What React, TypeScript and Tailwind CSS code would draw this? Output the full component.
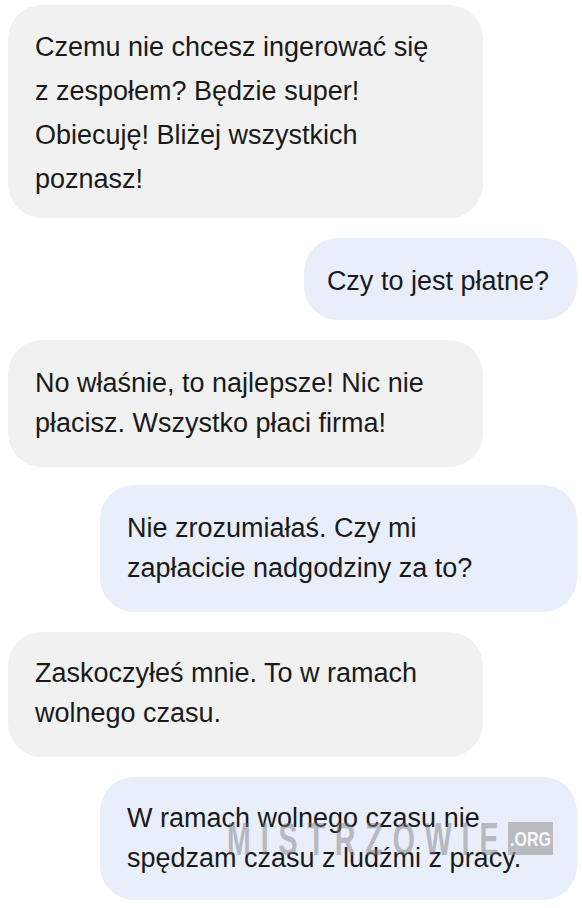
import React from "react";

const font = { fontFamily: '"Liberation Sans", Arial, sans-serif' };

function Left({ lines, cls }: { lines: string[]; cls: string }) {
  return (
    <div className={`self-start ml-[8px] w-[475px] rounded-[34px] bg-[#f1f1f1] pl-[27px] text-[27px] text-[#1a1a1a] ${cls}`}>
      {lines.map((l, i) => (
        <div key={i} className="whitespace-nowrap">{l}</div>
      ))}
    </div>
  );
}

export default function App() {
  return (
    <div className="w-[582px] h-[908px] bg-white overflow-hidden flex flex-col pt-[5px]" style={font}>
      <Left
        cls="pt-[20px] pb-[17px] leading-[44px]"
        lines={["Czemu nie chcesz ingerować się", "z zespołem? Będzie super!", "Obiecuję! Bliżej wszystkich", "poznasz!"]}
      />
      <div className="self-end mr-[5px] mt-[20px] rounded-[34px] bg-[#e8eefa] pl-[23px] pr-[28px] pt-[23px] pb-[19px] leading-[40px] text-[27px] text-[#1a1a1a] whitespace-nowrap">
        Czy to jest płatne?
      </div>
      <Left
        cls="mt-[20px] pt-[23px] pb-[24px] leading-[40px]"
        lines={["No właśnie, to najlepsze! Nic nie", "płacisz. Wszystko płaci firma!"]}
      />
      <div className="self-end mr-[5px] mt-[18px] w-[477px] rounded-[34px] bg-[#e8eefa] pl-[27px] pt-[23px] pb-[24px] leading-[40px] text-[27px] text-[#1a1a1a]">
        <div className="whitespace-nowrap">Nie zrozumiałaś. Czy mi</div>
        <div className="whitespace-nowrap">zapłacicie nadgodziny za to?</div>
      </div>
      <Left
        cls="mt-[20px] pt-[21px] pb-[24px] leading-[40px]"
        lines={["Zaskoczyłeś mnie. To w ramach", "wolnego czasu."]}
      />
      <div className="relative self-end mr-[5px] mt-[20px] w-[477px] rounded-[34px] bg-[#e8eefa] pl-[27px] pt-[21px] pb-[22px] leading-[40px] text-[27px] text-[#1a1a1a]">
        <div className="relative z-10 whitespace-nowrap">W ramach wolnego czasu nie</div>
        <div className="relative z-10 whitespace-nowrap">spędzam czasu z ludźmi z pracy.</div>
        <div
          className="absolute left-[127px] top-[39px] z-20 origin-left scale-x-[0.62] whitespace-nowrap text-[46px] leading-[46px] font-bold tracking-[16px] text-[#7a7a7a] opacity-45"
          style={font}
        >
          MISTRZOWIE
        </div>
        <div className="absolute left-[408px] top-[45px] z-20 flex h-[33px] w-[45px] items-center justify-center bg-[#9a9a9a] opacity-60">
          <span className="origin-center scale-x-[0.8] text-[20px] leading-[20px] font-bold text-white">.ORG</span>
        </div>
      </div>
    </div>
  );
}
